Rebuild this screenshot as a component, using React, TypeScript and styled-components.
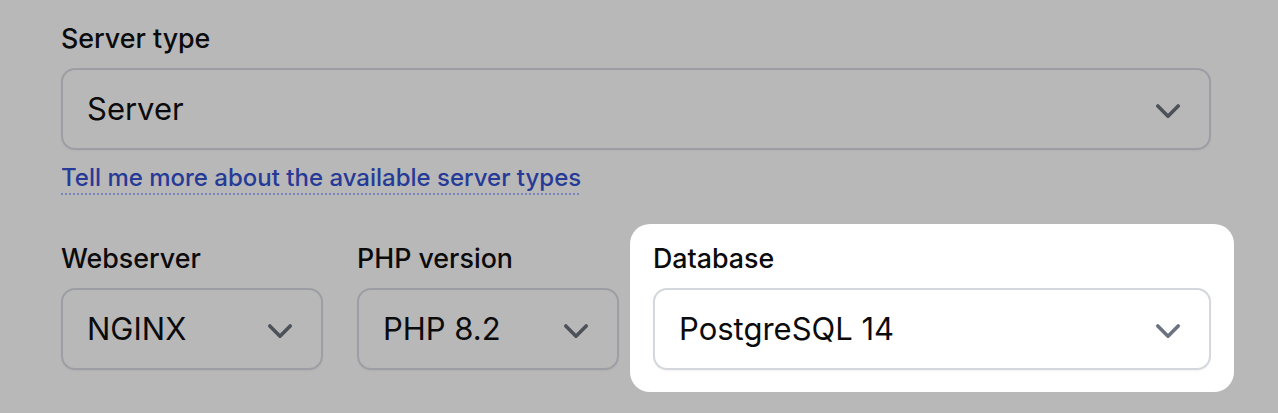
import React from 'react';
import styled, { createGlobalStyle } from 'styled-components';

const GlobalStyle = createGlobalStyle`
  html, body {
    margin: 0;
    padding: 0;
    background: #b8b8b8;
  }
  body {
    font-family: Inter, 'Noto Sans', 'Liberation Sans', sans-serif;
    color: #0b0b0c;
    -webkit-font-smoothing: antialiased;
  }
`;

// Chevron (heroicons mini chevron-down)
const Chevron: React.FC<{ color: string }> = ({ color }) => (
  <svg width="48" height="48" viewBox="0 0 20 20" fill={color} aria-hidden="true">
    <path
      fillRule="evenodd"
      d="M5.22 8.22a.75.75 0 0 1 1.06 0L10 11.94l3.72-3.72a.75.75 0 1 1 1.06 1.06l-4.25 4.25a.75.75 0 0 1-1.06 0L5.22 9.28a.75.75 0 0 1 0-1.06Z"
      clipRule="evenodd"
    />
  </svg>
);

type SelectProps = {
  value: string;
  active?: boolean;
};

const Select: React.FC<SelectProps> = ({ value, active }) => (
  <SelectBox $active={active}>
    <SelectValue>{value}</SelectValue>
    <Chevron color={active ? '#6b7280' : '#4c515a'} />
  </SelectBox>
);

const App: React.FC = () => {
  return (
    <>
      <GlobalStyle />
      <Page>
        <Field>
          <Label>Server type</Label>
          <Select value="Server" />
        </Field>
        <HelpLink href="#">Tell me more about the available server types</HelpLink>

        <Row>
          <Field>
            <Label>Webserver</Label>
            <Select value="NGINX" />
          </Field>
          <Field>
            <Label>PHP version</Label>
            <Select value="PHP 8.2" />
          </Field>
          <Spotlight>
            <Field>
              <Label>Database</Label>
              <Select value="PostgreSQL 14" active />
            </Field>
          </Spotlight>
        </Row>
      </Page>
    </>
  );
};

const Page = styled.div`
  box-sizing: border-box;
  width: 1278px;
  min-height: 413px;
  padding: 20px 67px 44px 61px;
  display: flex;
  flex-direction: column;
`;

const Field = styled.div`
  display: flex;
  flex-direction: column;
  gap: 12px;
`;

const Label = styled.label`
  font-size: 26.8px;
  line-height: 36px;
  font-weight: 500;
  color: #0b0b0c;
`;

const SelectBox = styled.div<{ $active?: boolean }>`
  box-sizing: border-box;
  height: 82px;
  display: flex;
  align-items: center;
  justify-content: space-between;
  padding: 0 17px 0 24px;
  border: 2px solid ${p => (p.$active ? '#d4d7dc' : '#9c9ea3')};
  border-radius: 14px;
  background: ${p => (p.$active ? '#ffffff' : 'transparent')};
  box-shadow: ${p => (p.$active ? '0 1px 2px rgba(0, 0, 0, 0.05)' : '0 1px 2px rgba(0, 0, 0, 0.04)')};
`;

const SelectValue = styled.span`
  font-size: 31px;
  line-height: 40px;
  color: #0b0b0c;
  white-space: nowrap;
`;

const HelpLink = styled.a`
  align-self: flex-start;
  margin-top: 12px;
  font-size: 24px;
  line-height: 32px;
  font-weight: 500;
  color: #263a97;
  text-decoration: underline dotted;
  text-decoration-color: #7784bd;
  text-decoration-thickness: 2px;
  text-underline-offset: 7px;
`;

const Row = styled.div`
  margin-top: 46px;
  display: grid;
  grid-template-columns: 262px 262px 1fr;
  align-items: start;
  column-gap: 34px;
`;

const Spotlight = styled.div`
  margin: -16px -23px -22px -23px;
  padding: 16px 23px 22px 23px;
  background: #ffffff;
  border-radius: 20px;
`;

export default App;
